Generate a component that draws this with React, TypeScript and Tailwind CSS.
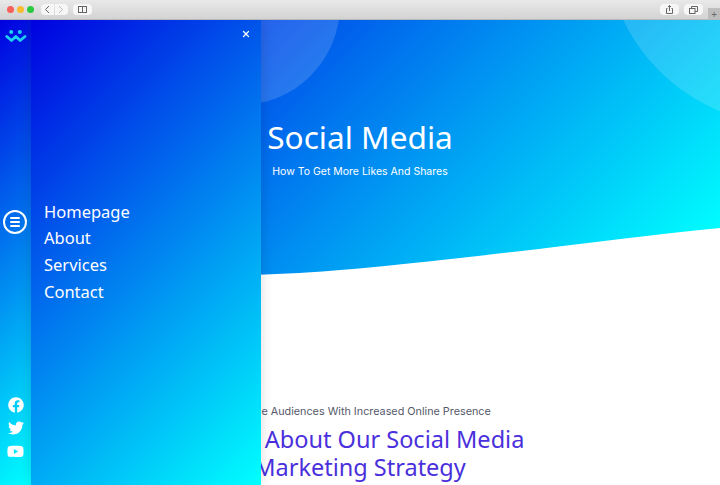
import React from "react";
import { X } from "lucide-react";
import { FaFacebook, FaTwitter, FaYoutube } from "react-icons/fa";

const NAV_LINKS = ["Homepage", "About", "Services", "Contact"];

const Logo = () => (
  <svg width="22" height="14" viewBox="0 0 22 14" fill="none">
    <path d="M1.8 7.5 L6.5 11.5 L10.8 7.5 L15.2 11.5 L20 7.5" stroke="#1fd0f5" strokeWidth="2.8" strokeLinecap="round" strokeLinejoin="round" />
    <circle cx="6.2" cy="3" r="2" fill="#1fd0f5" />
    <circle cx="14.8" cy="3" r="2" fill="#1fd0f5" />
  </svg>
);

const BrowserBar = () => (
  <div className="h-5 flex items-center bg-gradient-to-b from-[#e9e9e9] to-[#d3d3d3] border-b border-[#b8b8b8] relative">
    <div className="flex items-center gap-[3px] ml-[6.5px]">
      <span className="w-[7px] h-[7px] rounded-full bg-[#f5605a]" />
      <span className="w-[7px] h-[7px] rounded-full bg-[#f8bc30]" />
      <span className="w-[7px] h-[7px] rounded-full bg-[#2bc940]" />
    </div>
    <div className="flex ml-[7px] gap-px">
      <div className="w-[13px] h-[11px] bg-[#f6f6f6] rounded-l-sm flex items-center justify-center">
        <svg width="6" height="9" viewBox="0 0 6 9" fill="none"><path d="M5 1 L1.5 4.5 L5 8" stroke="#666" strokeWidth="1" /></svg>
      </div>
      <div className="w-[13px] h-[11px] bg-[#f6f6f6] rounded-r-sm flex items-center justify-center">
        <svg width="6" height="9" viewBox="0 0 6 9" fill="none"><path d="M1 1 L4.5 4.5 L1 8" stroke="#bbb" strokeWidth="1" /></svg>
      </div>
    </div>
    <div className="w-[19px] h-[11px] ml-[5px] bg-[#f6f6f6] rounded-sm flex items-center justify-center">
      <svg width="9" height="7" viewBox="0 0 9 7" fill="none"><rect x="0.5" y="0.5" width="8" height="6" stroke="#666" /><path d="M4.5 0.5 V6.5" stroke="#666" /></svg>
    </div>
    <div className="ml-auto flex items-center gap-[5px] mr-[17px]">
      <div className="w-[19px] h-[11px] bg-[#f6f6f6] rounded-sm flex items-center justify-center">
        <svg width="7" height="9" viewBox="0 0 7 9" fill="none"><path d="M1.5 3.5 H0.5 V8.5 H6.5 V3.5 H5.5 M3.5 6 V0.5 M2 2 L3.5 0.5 L5 2" stroke="#666" /></svg>
      </div>
      <div className="w-[19px] h-[11px] bg-[#f6f6f6] rounded-sm flex items-center justify-center">
        <svg width="9" height="8" viewBox="0 0 9 8" fill="none"><rect x="0.5" y="2.5" width="5.5" height="5" stroke="#666" /><path d="M2.5 2.5 V0.5 H8.5 V5.5 H6" stroke="#666" /></svg>
      </div>
    </div>
    <div className="absolute right-0 bottom-0 w-[12px] h-[11px] bg-[#bdbdbd] flex items-center justify-center text-[10px] leading-none text-[#666]">+</div>
  </div>
);

const Hero = () => (
  <div className="relative h-[255px] overflow-hidden">
    <div className="absolute inset-0 bg-[linear-gradient(135deg,#0000e0,#00ffff_96%)]" />
    <div className="absolute left-[140px] top-[-115px] w-[200px] h-[200px] rounded-full bg-white/15" />
    <div className="absolute left-[605px] top-[-265px] w-[370px] h-[370px] rounded-full bg-white/15" />
    <svg className="absolute left-0 bottom-0 w-full" height="60" viewBox="0 0 720 60" preserveAspectRatio="none">
      <path d="M0 60 L230 60 C300 60 360 54 460 43 C560 32 640 21 720 13 L720 60 Z" fill="#ffffff" />
    </svg>
    <div className="relative flex flex-col items-center pt-[97px]">
      <h1 className="text-[31.6px] leading-[40px] text-white font-['Noto_Sans',sans-serif]">Social Media</h1>
      <p className="mt-[7px] text-[10.5px] leading-4 text-white font-['Inter',sans-serif]">How To Get More Likes And Shares</p>
    </div>
  </div>
);

const Intro = () => (
  <div className="flex flex-col items-center pt-[129px]">
    <p className="text-[10.8px] leading-4 text-[#55596b] font-['Inter',sans-serif]">Engage Audiences With Increased Online Presence</p>
    <h2 className="mt-[5px] w-[400px] text-center text-[23.5px] leading-[28px] text-[#4a30dc] font-['Noto_Sans',sans-serif]">
      Learn About Our Social Media Marketing Strategy
    </h2>
  </div>
);

const Drawer = () => (
  <div className="absolute left-0 top-0 bottom-0 flex">
    <div className="w-[31px] flex flex-col items-center bg-[linear-gradient(135deg,#0000e0,#00ffff)]">
      <div className="mt-[9px] h-[14px]"><Logo /></div>
      <button className="mt-[167px] mr-px w-6 h-6 rounded-full border-2 border-white flex flex-col items-center justify-center gap-[2px]">
        <span className="w-[10px] h-[2px] bg-white rounded" />
        <span className="w-[10px] h-[2px] bg-white rounded" />
        <span className="w-[10px] h-[2px] bg-white rounded" />
      </button>
      <div className="mt-auto mb-[25px] flex flex-col items-center gap-[7px] text-white">
        <FaFacebook size={16} />
        <FaTwitter size={16} />
        <FaYoutube size={17} />
      </div>
    </div>
    <div className="relative w-[230px] flex flex-col pl-[13px] pt-[177.8px] bg-[linear-gradient(135deg,#0000e0,#00ffff)] shadow-[0_0_12px_rgba(0,0,0,0.15)]">
      <button className="absolute right-[10px] top-[9px] text-white"><X size={10} strokeWidth={3} /></button>
      {NAV_LINKS.map((link) => (
        <a key={link} className="h-[26.6px] text-[16.5px] leading-[27px] text-white font-['Noto_Sans',sans-serif]">{link}</a>
      ))}
    </div>
  </div>
);

export default function App() {
  return (
    <div className="w-[720px] h-[485px] overflow-hidden bg-white flex flex-col">
      <BrowserBar />
      <div className="relative flex-1 overflow-hidden">
        <Hero />
        <Intro />
        <Drawer />
      </div>
    </div>
  );
}
